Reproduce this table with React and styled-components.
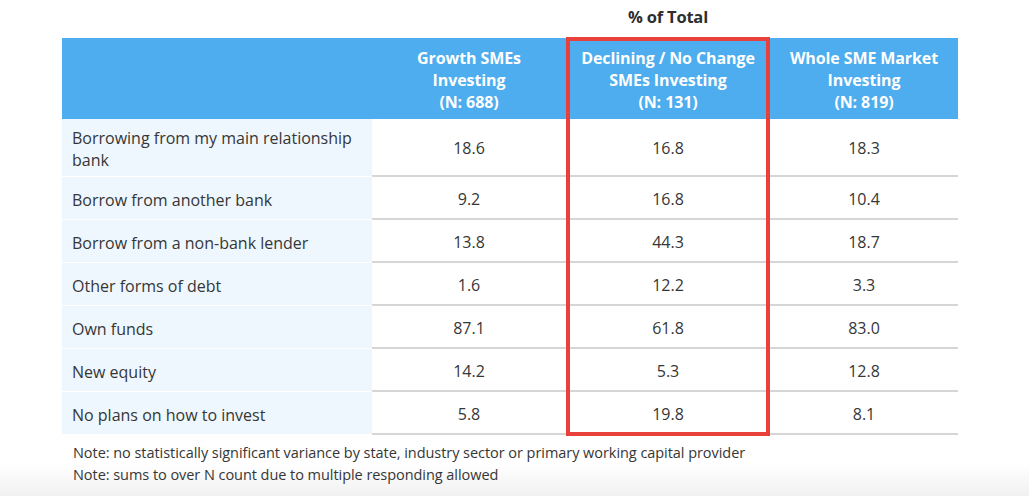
import React from "react";
import styled, { createGlobalStyle } from "styled-components";

const GlobalStyle = createGlobalStyle`
  html, body {
    margin: 0;
    padding: 0;
  }
  body {
    background: linear-gradient(to bottom, #ffffff 0px, #ffffff 464px, #f1f1f1 496px);
    min-height: 496px;
    font-family: "Open Sans", "Noto Sans", sans-serif;
    color: #363636;
  }
`;

const COLS = "310px 194px 204px 188px";

const Page = styled.div`
  padding: 0 0 0 62px;
  width: 896px;
`;

const Caption = styled.div`
  display: grid;
  grid-template-columns: ${COLS};
  height: 38px;
  align-items: center;
  font-weight: 700;
  font-size: 16.5px;
  letter-spacing: -0.2px;
  color: #2e2e2e;
  span {
    grid-column: 3;
    text-align: center;
    padding-bottom: 6px;
  }
`;

const TableWrap = styled.div`
  position: relative;
`;

const Row = styled.div`
  display: grid;
  grid-template-columns: ${COLS};
  height: ${(p) => p.h}px;
`;

const HeadCell = styled.div`
  background: #4dadee;
  color: #fff;
  font-weight: 700;
  font-size: 16px;
  line-height: 22px;
  letter-spacing: -0.1px;
  text-align: center;
  display: flex;
  align-items: center;
  justify-content: center;
  padding-top: 2px;
`;

const Label = styled.div`
  background: #eef7fd;
  border-bottom: 1px solid #ffffff;
  font-size: 16px;
  line-height: 22px;
  padding: 3px 16px 0 10px;
  display: flex;
  align-items: center;
`;

const Value = styled.div`
  border-bottom: 2px solid #d6d6d6;
  font-size: 16px;
  display: flex;
  align-items: center;
  justify-content: center;
  padding-top: 2px;
`;

const Highlight = styled.div`
  position: absolute;
  left: 504px;
  top: -1px;
  width: 204px;
  height: 399px;
  box-sizing: border-box;
  border: 4px solid #e8413b;
  pointer-events: none;
`;

const Notes = styled.div`
  padding: 7px 0 0 11px;
  font-size: 14.5px;
  line-height: 22px;
  letter-spacing: -0.05px;
  color: #363636;
`;

const rows = [
  ["Borrowing from my main relationship bank", "18.6", "16.8", "18.3", 58],
  ["Borrow from another bank", "9.2", "16.8", "10.4", 43],
  ["Borrow from a non-bank lender", "13.8", "44.3", "18.7", 43],
  ["Other forms of debt", "1.6", "12.2", "3.3", 43],
  ["Own funds", "87.1", "61.8", "83.0", 43],
  ["New equity", "14.2", "5.3", "12.8", 43],
  ["No plans on how to invest", "5.8", "19.8", "8.1", 43],
];

export default function App() {
  return (
    <>
      <GlobalStyle />
      <Page>
        <Caption>
          <span>% of Total</span>
        </Caption>
        <TableWrap>
          <Row h={81}>
            <HeadCell />
            <HeadCell>
              Growth SMEs
              <br />
              Investing
              <br />
              (N: 688)
            </HeadCell>
            <HeadCell>
              Declining / No Change
              <br />
              SMEs Investing
              <br />
              (N: 131)
            </HeadCell>
            <HeadCell>
              Whole SME Market
              <br />
              Investing
              <br />
              (N: 819)
            </HeadCell>
          </Row>
          {rows.map(([label, a, b, c, h]) => (
            <Row key={label} h={h}>
              <Label>{label}</Label>
              <Value>{a}</Value>
              <Value>{b}</Value>
              <Value>{c}</Value>
            </Row>
          ))}
          <Highlight />
        </TableWrap>
        <Notes>
          Note: no statistically significant variance by state, industry sector or primary working capital provider
          <br />
          Note: sums to over N count due to multiple responding allowed
        </Notes>
      </Page>
    </>
  );
}
